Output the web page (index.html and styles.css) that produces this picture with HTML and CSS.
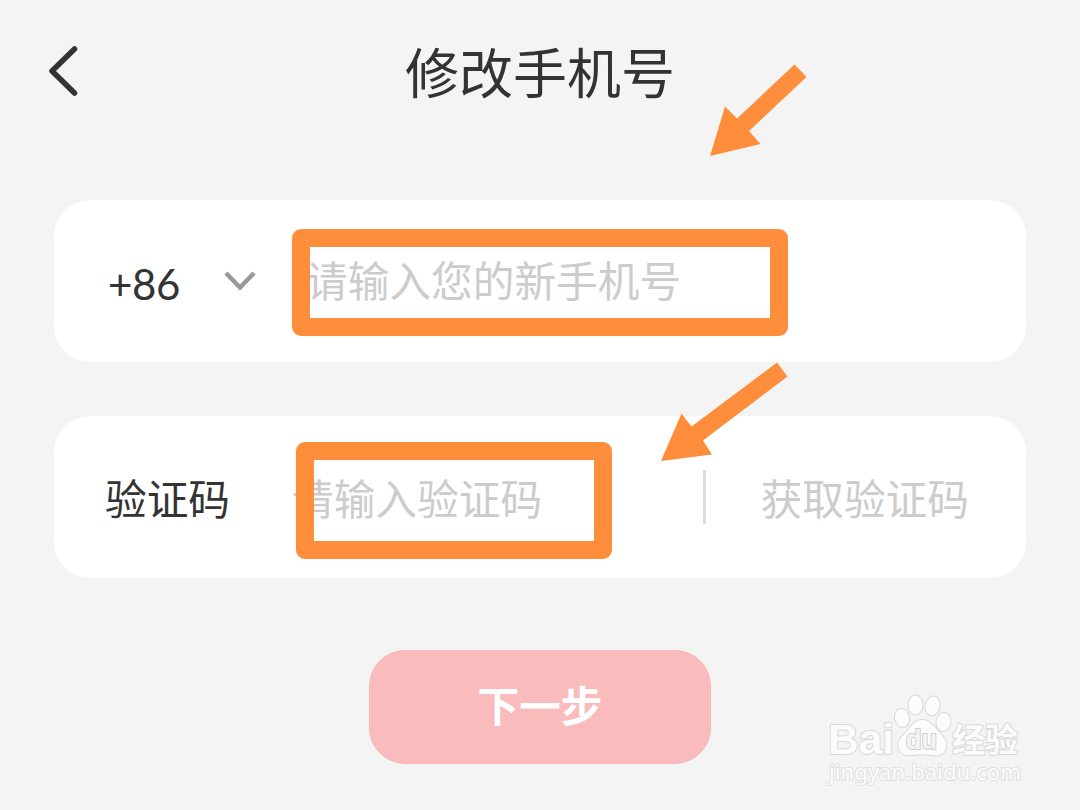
FILE: index.html
```html
<!DOCTYPE html>
<html lang="zh-CN">

<head>
    <meta charset="UTF-8">
    <title>修改手机号</title>
    <link rel="stylesheet" href="styles.css">
</head>

<body>
    <div class="page">
        <header class="header">
            <svg class="back" viewBox="0 0 32 52">
                <path d="M28.5 4L6 26L28.5 48" />
            </svg>
            <h1 class="title">修改手机号</h1>
        </header>

        <main class="form">
            <div class="row">
                <div class="area">
                    <span class="area-code">+86</span>
                    <svg class="down" viewBox="0 0 32 22">
                        <path d="M2 3L16 17.5L30 3" />
                    </svg>
                </div>
                <div class="field phone">
                    <span class="hint">请输入您的新手机号</span>
                    <div class="mark mark-phone"></div>
                </div>
            </div>
            <div class="row">
                <span class="label">验证码</span>
                <div class="field">
                    <span class="hint">请输入验证码</span>
                    <div class="mark mark-code"></div>
                </div>
                <span class="get-code">获取验证码</span>
            </div>
            <button type="button" class="next">下一步</button>
        </main>

        <!-- 箭头标注 -->
        <svg class="arrows" viewBox="0 0 1080 810">
            <path d="M710 156L725 106.500L737 118.500L794.500 64.500L806.500 77L749 131L760.500 144Z" />
            <path d="M661 461L681.500 413.500L691.500 426.500L777 362.500L787.500 376.500L703 440.500L712 454.500Z" />
        </svg>

        <!-- 水印 -->
        <svg class="watermark" viewBox="0 0 220 110">
            <text class="wm-logo" x="13" y="69" textLength="66" lengthAdjust="spacingAndGlyphs">Bai</text>
            <g class="paw">
                <ellipse cx="87" cy="33" rx="7" ry="9" transform="rotate(-12 87 33)" />
                <ellipse cx="100.500" cy="20" rx="7" ry="9.500" />
                <ellipse cx="117.500" cy="21" rx="7" ry="9.500" transform="rotate(12 117.500 21)" />
                <ellipse cx="128.500" cy="37" rx="7" ry="9" transform="rotate(8 128.500 37)" />
                <path d="M107 35C114 35 119 41 123 46C128 52 133 56 131 63C129 71 122 71 115 70C109 69 105 69 99 70C91 71 85 70 83.500 62C82 55 88 51 92 46C96 41 100 35 107 35Z" />
            </g>
            <text class="wm-du" x="91" y="64" textLength="31" lengthAdjust="spacingAndGlyphs">du</text>
            <text class="wm-cn" x="137" y="67" textLength="66" lengthAdjust="spacingAndGlyphs">经验</text>
            <text class="wm-url" x="14" y="95" textLength="192" lengthAdjust="spacingAndGlyphs">jingyan.baidu.com</text>
        </svg>
    </div>
</body>

</html>
```

FILE: styles.css
```css
* {
    box-sizing: border-box;
}

body {
    margin: 0;
    background-color: #f4f4f4;
    color: #333;
    font-family: "Noto Sans CJK SC", sans-serif;
}

.page {
    position: relative;
    height: 810px;
    overflow: hidden;
}

.header {
    display: grid;
    grid-template-columns: 32px 1fr 32px;
    align-items: center;
    height: 146px;
    padding: 0 46px;
}

.back {
    width: 32px;
    height: 52px;
    margin-bottom: 4px;
}

.back path {
    fill: none;
    stroke: #333;
    stroke-width: 5.5;
    stroke-linecap: round;
    stroke-linejoin: round;
}

.title {
    margin: 0 0 5px;
    font-size: 54px;
    font-weight: 400;
    line-height: 80px;
    text-align: center;
}

.form {
    display: flex;
    flex-direction: column;
    gap: 54px;
    padding: 54px 54px 0;
}

.row {
    display: flex;
    align-items: center;
    height: 162px;
    padding: 0 57px 0 51px;
    border-radius: 36px;
    background-color: #fff;
    font-size: 41.7px;
    line-height: 60px;
}

.area {
    display: flex;
    align-items: center;
    width: 201px;
    padding-left: 3px;
}

.area-code {
    width: 116px;
    padding-top: 5px;
    font-family: Lato, sans-serif;
    font-size: 42px;
    letter-spacing: -0.4px;
}

.down {
    width: 32px;
    height: 22px;
}

.down path {
    fill: none;
    stroke: #999;
    stroke-width: 4.5;
}

.label {
    width: 187px;
}

.field {
    position: relative;
    flex: 1;
}

.phone {
    margin-bottom: 4px;
}

.hint,
.get-code {
    color: #ccc;
}

/* 输入框高亮 */
.mark {
    position: absolute;
    border: 18px solid #ff8e3c;
    border-radius: 9px;
}

.mark-phone {
    left: -14px;
    top: -20px;
    width: 496px;
    height: 107px;
}

.mark-code {
    left: 4px;
    top: -25px;
    width: 316px;
    height: 117px;
}

.get-code {
    display: flex;
    align-items: center;
    gap: 55px;
}

.get-code::before {
    content: "";
    width: 3px;
    height: 54px;
    background-color: #ddd;
}

.next {
    align-self: center;
    width: 342px;
    height: 114px;
    margin-top: 18px;
    padding: 0 0 7px;
    border: 1px solid #f6b7b9;
    border-radius: 36px;
    background-color: #fabbbd;
    color: #fff;
    font-family: inherit;
    font-size: 41.6px;
    font-weight: 700;
}

.arrows {
    position: absolute;
    left: 0;
    top: 0;
    width: 1080px;
    height: 810px;
    fill: #ff8e3c;
    pointer-events: none;
}

.watermark {
    position: absolute;
    left: 815px;
    top: 685px;
    width: 220px;
    height: 110px;
    fill: #fcfcfc;
    stroke: #d8d8d8;
    stroke-width: 2;
    paint-order: stroke;
}

.wm-logo {
    font-family: "Liberation Sans", sans-serif;
    font-size: 43px;
    font-weight: 700;
}

.wm-du {
    fill: #f4f4f4;
    stroke: #cfcfcf;
    font-family: "Liberation Sans", sans-serif;
    font-size: 27px;
    font-weight: 700;
}

.wm-cn {
    font-size: 33px;
    font-weight: 700;
}

.wm-url {
    stroke: #e0e0e0;
    font-family: "Noto Sans", sans-serif;
    font-size: 22px;
}
```
